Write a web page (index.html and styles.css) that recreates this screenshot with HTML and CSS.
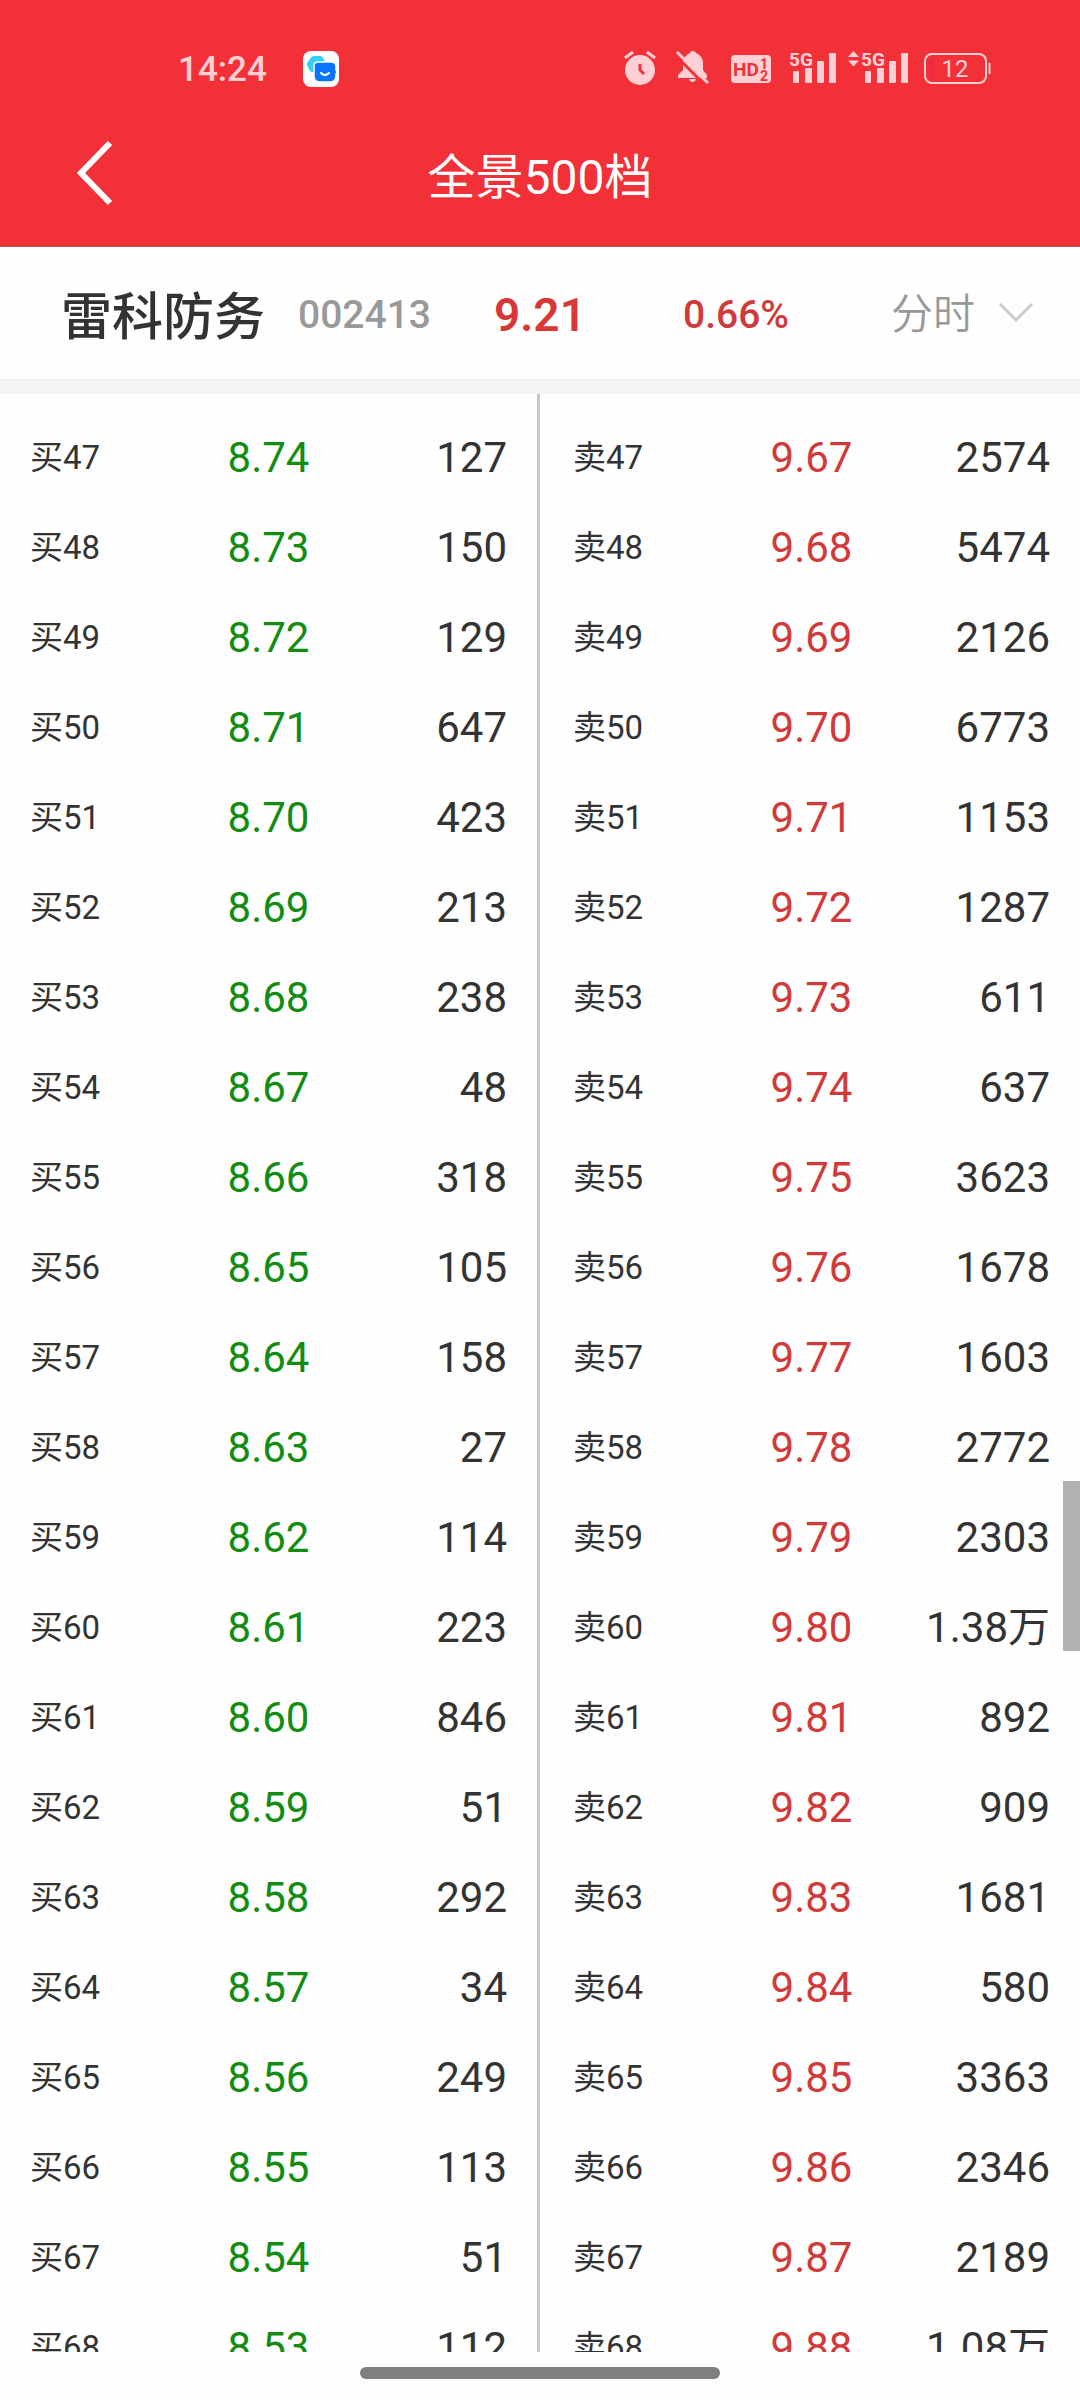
FILE: index.html
```html
<!DOCTYPE html>
<html lang="zh-CN">
  <head>
    <meta charset="UTF-8" />
    <meta name="viewport" content="width=device-width, initial-scale=1.0" />
    <title>全景500档</title>
    <link rel="stylesheet" href="styles.css" />
  </head>
  <body>
    <div class="app">
      <header class="header">
        <div class="status-bar">
          <span class="time">14:24</span>
          <svg class="app-icon" width="36" height="36" viewBox="0 0 36 36">
            <rect width="36" height="36" rx="8" fill="#fff" />
            <path d="M8 6.500 Q9 5 11 5 H17 Q19 5 20 7 L22 10 V18 L13 21 H9 Q7 21 6.500 19 L4 14 Q3.500 13 4.200 12 Z" fill="#35d0f8" />
            <path d="M15 11 H28 Q33 11 33 16 V19 L34 21 L33 23 V25 Q33 31 27 31 H17 Q11 31 11 25 V15 Q11 11 15 11 Z" fill="#0a74fb" stroke="#fff" stroke-width="1.500" />
            <path d="M18 22 Q22 26 26 22" fill="none" stroke="#fff" stroke-width="2" stroke-linecap="round" />
          </svg>
          <div class="status-icons">
            <!-- alarm -->
            <svg width="39" height="36" viewBox="0 0 39 36">
              <circle cx="16" cy="19" r="15" fill="currentColor" />
              <path d="M1 7 L9 1 M23 1 L31 7" stroke="currentColor" stroke-width="3" />
              <path d="M16 13 V19 L20 23" class="cut" stroke-width="3" />
            </svg>
            <!-- muted -->
            <svg width="44" height="36" viewBox="0 0 44 36">
              <path d="M15 2 Q15 0 18 0 Q20 0 21 2 Q28 5 28 12 V19 L32 24 V27 H3 V24 L8 19 V12 Q8 5 15 2 Z" fill="currentColor" />
              <path d="M14 28 H21 Q20 31 17.500 31 Q15 31 14 28 Z" fill="currentColor" />
              <path d="M0 4 L31 35" class="cut" stroke-width="3" />
              <path d="M2 1 L33 32" stroke="currentColor" stroke-width="3" />
            </svg>
            <!-- HD -->
            <svg class="hd" width="46" height="36" viewBox="0 0 46 36">
              <rect y="4" width="40" height="28" rx="4" fill="currentColor" />
              <text x="2" y="25" font-size="19">HD</text>
              <text x="29" y="18" font-size="14">1</text>
              <text x="29" y="30" font-size="14">2</text>
            </svg>
            <!-- signal, sim 1 -->
            <svg width="47" height="36" viewBox="0 0 47 36" fill="currentColor">
              <text class="net" x="0" y="15">5G</text>
              <rect x="4" y="20" width="6" height="12" rx="1" />
              <rect x="16" y="17" width="7" height="15" rx="1" />
              <rect x="28" y="10" width="7" height="22" rx="1" />
              <rect x="40" y="2" width="7" height="30" rx="1" />
            </svg>
            <!-- signal, sim 2 -->
            <svg width="60" height="36" viewBox="0 0 60 36" fill="currentColor">
              <path d="M0 6 L5.500 0 L11 6 Z M0 9.500 H11 L5.500 15.500 Z" />
              <text class="net" x="13" y="15">5G</text>
              <rect x="17" y="20" width="6" height="12" rx="1" />
              <rect x="29" y="17" width="7" height="15" rx="1" />
              <rect x="41" y="10" width="7" height="22" rx="1" />
              <rect x="53" y="2" width="7" height="30" rx="1" />
            </svg>
            <!-- battery -->
            <svg width="71" height="36" viewBox="0 0 71 36">
              <rect x="5" y="3" width="61" height="29" rx="7" fill="none" stroke="currentColor" stroke-width="2" />
              <rect x="9" y="6" width="6" height="23" rx="3" fill="#f02a46" />
              <path d="M69.500 12 V23" stroke="currentColor" stroke-width="2" />
              <text x="35" y="26" font-size="24" text-anchor="middle" fill="currentColor">12</text>
            </svg>
          </div>
        </div>
        <div class="nav">
          <button class="back" type="button" aria-label="返回">
            <svg width="38" height="66" viewBox="0 0 38 66">
              <path d="M34 3 L5 33 L34 63" fill="none" stroke="#fff" stroke-width="6" />
            </svg>
          </button>
          <h1>全景500档</h1>
        </div>
      </header>

      <section class="stock">
        <h2 class="name">雷科防务</h2>
        <span class="code">002413</span>
        <span class="price">9.21</span>
        <span class="change">0.66%</span>
        <label class="period">
          <select aria-label="周期">
            <option>分时</option>
          </select>
          <svg width="34" height="20" viewBox="0 0 34 20">
            <path d="M1 1 L17 17 L33 1" fill="none" stroke="#ccc" stroke-width="3" />
          </svg>
        </label>
      </section>

      <main class="book">
        <div class="side buy">
          <table>
            <tbody id="buy"></tbody>
          </table>
        </div>
        <div class="side sell">
          <table>
            <tbody id="sell"></tbody>
          </table>
        </div>
        <div class="scroll-thumb"></div>
      </main>

      <footer class="home-area">
        <div class="home-bar"></div>
      </footer>
    </div>

    <script>
      const firstLevel = 47;
      const buyVolumes = [
        "127", "150", "129", "647", "423", "213", "238", "48", "318", "105", "158",
        "27", "114", "223", "846", "51", "292", "34", "249", "113", "51", "112",
      ];
      const sellVolumes = [
        "2574", "5474", "2126", "6773", "1153", "1287", "611", "637", "3623", "1678", "1603",
        "2772", "2303", "1.38万", "892", "909", "1681", "580", "3363", "2346", "2189", "1.08万",
      ];

      // Prices are in cents, one level is one cent
      function fillSide(id, label, startPrice, step, volumes) {
        let rows = "";
        for (let i = 0; i < volumes.length; i++) {
          const price = ((startPrice + step * i) / 100).toFixed(2);
          rows +=
            "<tr><th scope='row'>" + label + (firstLevel + i) + "</th>" +
            "<td class='level-price'>" + price + "</td>" +
            "<td class='volume'>" + volumes[i] + "</td></tr>";
        }
        document.getElementById(id).innerHTML = rows;
      }

      fillSide("buy", "买", 874, -1, buyVolumes);
      fillSide("sell", "卖", 967, 1, sellVolumes);
    </script>
  </body>
</html>
```
FILE: styles.css
```css
* {
  margin: 0;
  padding: 0;
  box-sizing: border-box;
}

body {
  font-family: Roboto, "Noto Sans CJK SC", sans-serif;
  background-color: #fefefe;
  color: #333;
}

svg {
  display: block;
  flex: none;
  overflow: visible;
}

.app {
  display: flex;
  flex-direction: column;
  height: 100vh;
}

/* Red header */
.header {
  background-color: #f23038;
  border-bottom: 1px solid #a8505c;
}

.status-bar {
  display: flex;
  align-items: center;
  height: 100px;
  padding: 38px 89px 0 178px;
  color: #ffd0d3;
}

.time {
  font-size: 35px;
  font-weight: 500;
}

.app-icon {
  margin-left: 36px;
}

.status-icons {
  display: flex;
  gap: 12px;
  margin-left: auto;
}

.cut {
  fill: none;
  stroke: #f23038;
}

.hd text {
  fill: #f23038;
  font-weight: bold;
}

.net {
  font-size: 19px;
  font-weight: bold;
}

.nav {
  display: grid;
  grid-template-columns: 1fr auto 1fr;
  align-items: center;
  height: 146px;
  padding: 0 76px;
  color: #fff;
}

.nav h1 {
  font-size: 48px;
  font-weight: normal;
}

.back {
  justify-self: start;
  background: none;
  border: none;
  cursor: pointer;
}

/* Stock summary */
.stock {
  display: grid;
  grid-template-columns: 237fr 196fr 189fr 208fr 189fr;
  align-items: center;
  height: 147px;
  padding-left: 61px;
  border-bottom: 15px solid #f4f4f4;
}

.name {
  font-size: 51px;
  font-weight: 500;
  white-space: nowrap;
}

.code,
.price,
.change {
  padding-top: 4px;
}

.code {
  font-size: 39px;
  font-weight: 500;
  color: #999;
}

.price {
  font-size: 46px;
  font-weight: 600;
  color: #d93636;
}

.change {
  font-size: 39px;
  font-weight: 500;
  color: #d03a3a;
}

.period {
  display: flex;
  align-items: center;
  gap: 23px;
}

.period select {
  appearance: none;
  padding-top: 2px;
  background: none;
  border: none;
  font-family: inherit;
  font-size: 42px;
  font-weight: 350;
  color: #999;
}

/* Order book */
.book {
  position: relative;
  display: flex;
  flex: 1;
  min-height: 0;
  overflow: hidden;
}

.side {
  flex: 1;
  padding: 18px 30px 0;
}

.buy {
  border-right: 3px solid #c8c8c8;
}

.sell {
  padding-left: 33px;
}

table {
  width: 100%;
  table-layout: fixed;
  border-collapse: collapse;
}

tr {
  height: 90px;
}

th {
  padding-bottom: 4px;
  font-size: 33px;
  font-weight: normal;
  text-align: left;
}

td {
  padding-top: 2px;
  font-size: 42px;
  line-height: 48px;
}

.level-price {
  text-align: center;
}

.buy .level-price {
  color: #128c12;
}

.sell .level-price {
  color: #d03a3a;
}

.volume {
  text-align: right;
}

.scroll-thumb {
  position: absolute;
  top: 1087px;
  right: 0;
  width: 17px;
  height: 170px;
  background-color: #b2b2b2;
}

/* System gesture bar */
.home-area {
  height: 48px;
  padding-top: 15px;
}

.home-bar {
  width: 360px;
  height: 12px;
  margin: 0 auto;
  border-radius: 6px;
  background-color: #7f7f7f;
}
```
